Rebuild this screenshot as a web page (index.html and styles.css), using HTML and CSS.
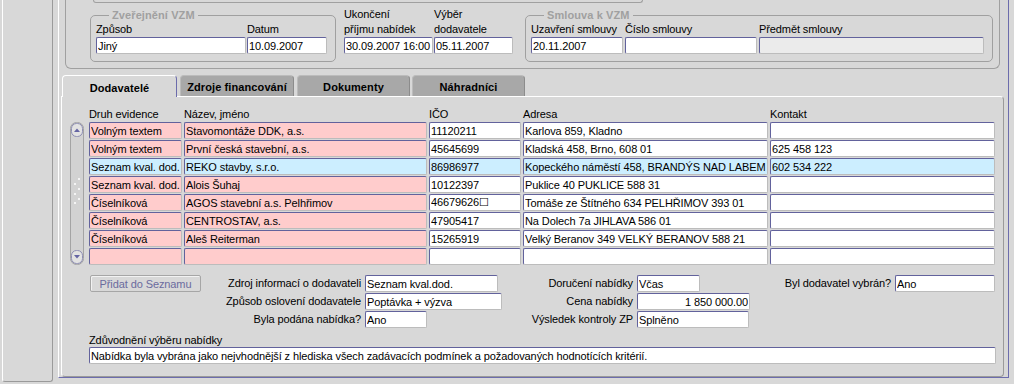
FILE: index.html
```html
<!DOCTYPE html>
<html lang="cs">
<head>
  <meta charset="UTF-8" />
  <title>Dodavatelé VZM</title>
  <link rel="stylesheet" href="styles.css">
</head>
<body>
<div class="screen">
  <div class="side"></div>

  <div class="canvas">
    <div class="frame">
      <div class="frame-top"></div>
      <div class="frame-row">
        <fieldset class="group g-pub">
          <legend>Zveřejnění VZM</legend>
          <div class="fields">
            <div class="field w150"><span>Způsob</span><input value="Jiný"></div>
            <div class="field w80 ml1"><span>Datum</span><input value="10.09.2007"></div>
          </div>
        </fieldset>
        <div class="field col-top w89 ml8"><span>Ukončení</span><span>příjmu nabídek</span><input value="30.09.2007 16:00"></div>
        <div class="field col-top w79 ml1"><span>Výběr</span><span>dodavatele</span><input value="05.11.2007"></div>
        <fieldset class="group g-contract">
          <legend>Smlouva k VZM</legend>
          <div class="fields">
            <div class="field w92"><span>Uzavření smlouvy</span><input value="20.11.2007"></div>
            <div class="field w132 ml2"><span>Číslo smlouvy</span><input value=""></div>
            <div class="field w225 ml2"><span>Předmět smlouvy</span><input class="off" value=""></div>
          </div>
        </fieldset>
      </div>
    </div>

    <div class="tabs">
      <div class="tab active t1">Dodavatelé</div>
      <div class="tab t2">Zdroje financování</div>
      <div class="tab t3">Dokumenty</div>
      <div class="tab t4">Náhradníci</div>
    </div>

    <div class="panel">
      <div class="table">
        <svg class="scroll" width="14" height="143" viewBox="0 0 14 143">
          <rect x="0.5" y="0.5" width="13" height="142" rx="6" fill="#d2d2d2" stroke="#a4a4a4"/>
          <rect x="1.5" y="1.5" width="11" height="13" rx="5" fill="#e2e2e2" stroke="#8e8eb4"/>
          <path d="M4 10 L7 6.5 L10 10 Z" fill="#6464a4"/>
          <rect x="1.5" y="128.5" width="11" height="13" rx="5" fill="#e2e2e2" stroke="#8e8eb4"/>
          <path d="M4 133 L7 136.5 L10 133 Z" fill="#6464a4"/>
          <g fill="#f4f4f4">
            <rect x="8" y="56" width="2" height="2"/>
            <rect x="4" y="61" width="2" height="2"/>
            <rect x="8" y="66" width="2" height="2"/>
            <rect x="4" y="71" width="2" height="2"/>
            <rect x="8" y="76" width="2" height="2"/>
            <rect x="4" y="80" width="2" height="2"/>
          </g>
        </svg>
        <div class="grid">
          <span class="th">Druh evidence</span>
          <span class="th">Název, jméno</span>
          <span class="th">IČO</span>
          <span class="th">Adresa</span>
          <span class="th">Kontakt</span>

          <input class="pk" value="Volným textem">
          <input class="pk" value="Stavomontáže DDK, a.s.">
          <input value="11120211">
          <input value="Karlova 859, Kladno">
          <input value="">

          <input class="pk" value="Volným textem">
          <input class="pk" value="První česká stavební, a.s.">
          <input value="45645699">
          <input value="Kladská 458, Brno, 608 01">
          <input value="625 458 123">

          <input class="sel" value="Seznam kval. dod.">
          <input class="sel" value="REKO stavby, s.r.o.">
          <input class="sel" value="86986977">
          <input class="sel" value="Kopeckého náměstí 458, BRANDÝS NAD LABEM">
          <input class="sel" value="602 534 222">

          <input class="pk" value="Seznam kval. dod.">
          <input class="pk" value="Alois Šuhaj">
          <input value="10122397">
          <input value="Puklice 40 PUKLICE 588 31">
          <input value="">

          <input class="pk" value="Číselníková">
          <input class="pk" value="AGOS stavební a.s. Pelhřimov">
          <input value="46679626☐">
          <input value="Tomáše ze Štítného 634 PELHŘIMOV 393 01">
          <input value="">

          <input class="pk" value="Číselníková">
          <input class="pk" value="CENTROSTAV, a.s.">
          <input value="47905417">
          <input value="Na Dolech 7a JIHLAVA 586 01">
          <input value="">

          <input class="pk" value="Číselníková">
          <input class="pk" value="Aleš Reiterman">
          <input value="15265919">
          <input value="Velký Beranov 349 VELKÝ BERANOV 588 21">
          <input value="">

          <input class="pk" value="">
          <input class="pk" value="">
          <input value="">
          <input value="">
          <input value="">
        </div>
      </div>

      <div class="form">
        <button class="btn">Přidat do Seznamu</button>
        <span class="fl">Zdroj informací o dodavateli</span>
        <input class="w133" value="Seznam kval.dod.">
        <span class="fl">Doručení nabídky</span>
        <input class="w63" value="Včas">
        <span class="fl">Byl dodavatel vybrán?</span>
        <input class="w100" value="Ano">

        <span class="fl c2">Způsob oslovení dodavatele</span>
        <input class="w137" value="Poptávka + výzva">
        <span class="fl">Cena nabídky</span>
        <input class="w113 num" value="1 850 000.00">

        <span class="fl c2">Byla podána nabídka?</span>
        <input class="w62" value="Ano">
        <span class="fl">Výsledek kontroly ZP</span>
        <input class="w112" value="Splněno">
      </div>

      <div class="reason">
        <span>Zdůvodnění výběru nabídky</span>
        <input value="Nabídka byla vybrána jako nejvhodnější z hlediska všech zadávacích podmínek a požadovaných hodnotících kritérií.">
      </div>
    </div>
  </div>
</div>
</body>
</html>
```

FILE: styles.css
```css
* { box-sizing: border-box; }
html, body { margin: 0; height: 100%; overflow: hidden; }
body {
  background: #d8d8d8;
  font-family: "Liberation Sans", Arial, sans-serif;
  font-size: 11px;
  letter-spacing: -0.1px;
  color: #000;
}
.screen { display: flex; height: 384px; }
.side {
  margin-left: 2px;
  width: 51px;
  height: 382px;
  border-left: 1px solid #fff;
  border-right: 1px solid #9a9a9a;
  border-bottom: 1px solid #9a9a9a;
  border-radius: 0 0 3px 3px;
}
.canvas {
  margin-left: 5px;
  width: 951px;
  height: 378px;
  border-left: 1px solid #fff;
  border-right: 1px solid #6c6cac;
  border-bottom: 1px solid #6c6cac;
  display: flex;
  flex-direction: column;
}

/* inputs */
input {
  font: inherit;
  letter-spacing: inherit;
  color: #000;
  height: 17px;
  margin: 0;
  padding: 0 1px;
  border: 1px solid;
  border-color: #62629c #bcbcbc #bcbcbc #62629c;
  border-radius: 2px;
  background: #fff;
  outline: none;
  min-width: 0;
}
input.off { background: #ebebeb; }
input.pk { background: #ffcccc; }
input.sel { background: #cceeff; }
input.num { text-align: right; }

/* top frame */
.frame {
  margin-left: 6px;
  width: 935px;
  height: 69px;
  flex: none;
  border: 1px solid #a0a0a0;
  border-top: 0;
  border-radius: 0 0 6px 6px;
}
.frame-top {
  margin-left: 27px;
  width: 550px;
  height: 3px;
  border: 1px solid #a0a0a0;
  border-top: 0;
  border-radius: 0 0 4px 4px;
}
.frame-row { display: flex; align-items: flex-start; margin-top: 6px; }
.group {
  margin: 0;
  padding: 0 8px 7px 5px;
  border: 1px solid #a0a0a0;
  border-radius: 5px;
  min-width: 0;
}
.group legend {
  margin-left: 13px;
  padding: 0 3px;
  font-weight: bold;
  letter-spacing: 0.1px;
  color: #a0a0a0;
  line-height: 13px;
}
.g-pub { margin-left: 24px; width: 246px; }
.g-contract { margin-left: 12px; width: 468px; }
.fields { display: flex; }
.field { display: flex; flex-direction: column; flex: none; }
.field span { line-height: 15px; white-space: nowrap; }
.col-top { margin-top: -2px; }
.ml1 { margin-left: 1px; }
.ml2 { margin-left: 2px; }
.ml8 { margin-left: 8px; }
.w62 { width: 62px; }
.w63 { width: 63px; }
.w79 { width: 79px; }
.w80 { width: 80px; }
.w89 { width: 89px; }
.w92 { width: 92px; }
.w100 { width: 100px; }
.w112 { width: 112px; }
.w113 { width: 113px; }
.w132 { width: 132px; }
.w133 { width: 133px; }
.w137 { width: 137px; }
.w150 { width: 150px; }
.w225 { width: 225px; }

/* tabs */
.tabs {
  display: flex;
  align-items: flex-start;
  margin-top: 6px;
  height: 22px;
  margin-bottom: -1px;
  z-index: 1;
  flex: none;
}
.tab {
  height: 21px;
  margin-left: 3px;
  padding-top: 2px;
  display: flex;
  align-items: center;
  justify-content: center;
  font-weight: bold;
  letter-spacing: 0.1px;
  background: #a8a8a8;
  border: 1px solid #bcbcbc;
  border-right-color: #8c8c8c;
  border-bottom: 0;
  border-radius: 4px 4px 0 0;
}
.tab.active {
  height: 22px;
  background: #d8d8d8;
  border-color: #fff #6c6cac #fff #fff;
}
.t1 { width: 115px; }
.t2 { width: 114px; }
.t3 { width: 113px; }
.t4 { width: 113px; margin-left: 2px; }

/* tab panel */
.panel {
  margin-left: 2px;
  width: 943px;
  height: 281px;
  flex: none;
  border: 1px solid;
  border-color: #fff #9a9a9a #9a9a9a #fff;
  border-radius: 0 4px 4px 4px;
  padding: 11px 0 0 8px;
}
.table { display: flex; }
.scroll { margin-top: 14px; flex: none; }
.grid {
  margin-left: 5px;
  display: grid;
  grid-template-columns: 93px 243px 92px 245px 225px;
  grid-template-rows: 13px;
  grid-auto-rows: 17px;
  column-gap: 2px;
  row-gap: 1px;
}
.th { line-height: 13px; white-space: nowrap; }

.form {
  display: grid;
  grid-template-columns: 112px 164px 137px 135px 113px 145px 100px;
  grid-auto-rows: 17px;
  row-gap: 1px;
  margin: 10px 0 0 19px;
}
.form input { justify-self: start; }
.fl {
  text-align: right;
  padding-right: 4px;
  line-height: 17px;
  white-space: nowrap;
}
.c2 { grid-column: 2; }
.btn {
  margin-left: 1px;
  width: 111px;
  height: 17px;
  padding: 0;
  font: inherit;
  letter-spacing: inherit;
  color: #6b6b9e;
  background: #d8d8d8;
  border: 1px solid #a6a6a6;
  border-radius: 2px;
  box-shadow: inset 1px 1px 0 #f2f2f2;
}
.reason {
  margin: 5px 0 0 19px;
  display: flex;
  flex-direction: column;
}
.reason span { line-height: 14px; }
.reason input { width: 907px; }
```
